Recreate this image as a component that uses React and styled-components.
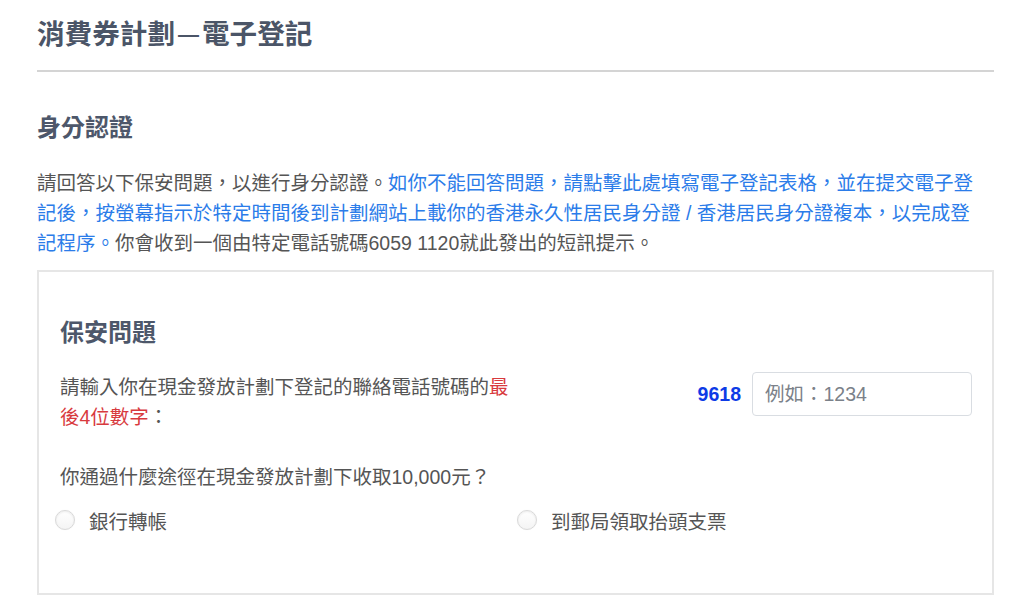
import React from "react";
import styled, { createGlobalStyle } from "styled-components";

const Global = createGlobalStyle`
  html, body { margin: 0; padding: 0; background: #ffffff; }
  body {
    font-family: "Liberation Sans", "Noto Sans CJK TC", sans-serif;
    color: #555555;
  }
  * { box-sizing: border-box; }
`;

const Page = styled.div`
  padding: 15px 30px 0 37px;
`;

const Header = styled.header`
  padding-bottom: 15px;
  border-bottom: 2px solid #d4d4d4;
`;

const Title = styled.h1`
  margin: 0;
  height: 40px;
  font-size: 27.6px;
  line-height: 40px;
  font-weight: 700;
  color: #4b5567;
`;

const Dash = styled.span`
  display: inline-block;
  font-size: 21px;
  line-height: 1;
  margin: 0 3px;
  vertical-align: 3px;
`;

const SectionTitle = styled.h2`
  margin: ${(p) => p.$mt || 0}px 0 0;
  font-size: 24px;
  line-height: 34px;
  font-weight: 700;
  color: #4d576a;
`;

const Paragraph = styled.p`
  margin: 23px 0 0;
  max-width: 950px;
  font-size: 19.5px;
  line-height: 30px;
  color: #555555;
`;

const Link = styled.span`
  color: #2b7ce9;
`;

const Alert = styled.span`
  color: #d83a3e;
`;

const Card = styled.section`
  margin-top: 12px;
  border: 2px solid #e6e6e6;
  padding: 44px 20px 58px 21px;
`;

const QuestionRow = styled.div`
  margin-top: 22px;
  display: flex;
  justify-content: space-between;
  align-items: flex-start;
`;

const QuestionText = styled.div`
  width: 460px;
  font-size: 19.5px;
  line-height: 30px;
  color: #555555;
`;

const AnswerGroup = styled.div`
  display: flex;
  align-items: center;
  gap: 11px;
`;

const Hint = styled.span`
  font-size: 19.5px;
  font-weight: 700;
  color: #0d3be6;
`;

const Input = styled.input`
  width: 220px;
  height: 44px;
  border: 1px solid #d9dde2;
  border-radius: 4px;
  padding: 0 12px;
  font-family: "Liberation Sans", "Noto Sans CJK TC", sans-serif;
  font-size: 19.5px;
  color: #555555;
  outline: none;
  &::placeholder { color: #7b8189; }
`;

const Question = styled.div`
  margin-top: 30px;
  font-size: 19.5px;
  line-height: 30px;
  color: #555555;
`;

const Options = styled.div`
  margin-top: 13px;
  display: grid;
  grid-template-columns: 1fr 1fr;
  column-gap: 12px;
`;

const Option = styled.label`
  display: flex;
  align-items: center;
  gap: 14px;
  margin-left: -5px;
  height: 30px;
  font-size: 19.5px;
  color: #555555;
  cursor: pointer;
`;

const RadioCircle = styled.span`
  width: 20px;
  height: 20px;
  border-radius: 50%;
  border: 1px solid #d9d9d9;
  background: linear-gradient(#ffffff, #f4f4f4);
  box-shadow: inset 0 1px 2px rgba(0, 0, 0, 0.07), 0 0 1px rgba(0, 0, 0, 0.08);
  flex: none;
`;

export default function App() {
  return (
    <>
      <Global />
      <Page>
        <Header>
          <Title>
            消費券計劃<Dash>—</Dash>電子登記
          </Title>
        </Header>
        <SectionTitle $mt={39}>身分認證</SectionTitle>
        <Paragraph>
          請回答以下保安問題，以進行身分認證。
          <Link>
            如你不能回答問題，請點擊此處填寫電子登記表格，並在提交電子登記後，按螢幕指示於特定時間後到計劃網站上載你的香港永久性居民身分證 / 香港居民身分證複本，以完成登記程序。
          </Link>
          你會收到一個由特定電話號碼6059 1120就此發出的短訊提示。
        </Paragraph>
        <Card>
          <SectionTitle>保安問題</SectionTitle>
          <QuestionRow>
            <QuestionText>
              請輸入你在現金發放計劃下登記的聯絡電話號碼的<Alert>最後4位數字</Alert>：
            </QuestionText>
            <AnswerGroup>
              <Hint>9618</Hint>
              <Input placeholder="例如：1234" />
            </AnswerGroup>
          </QuestionRow>
          <Question>你通過什麼途徑在現金發放計劃下收取10,000元？</Question>
          <Options>
            <Option>
              <RadioCircle />
              銀行轉帳
            </Option>
            <Option>
              <RadioCircle />
              到郵局領取抬頭支票
            </Option>
          </Options>
        </Card>
      </Page>
    </>
  );
}
